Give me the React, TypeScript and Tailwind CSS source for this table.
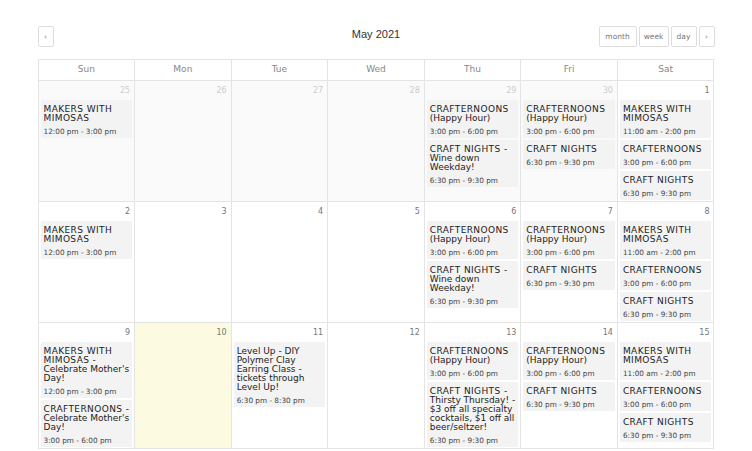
type CalEvent = { title: string[]; time: string };
type Day = { n: number; other?: boolean; today?: boolean; events: CalEvent[] };

const makers = (time: string): CalEvent => ({ title: ['MAKERS WITH', 'MIMOSAS'], time });
const happy: CalEvent = { title: ['CRAFTERNOONS', '(Happy Hour)'], time: '3:00 pm - 6:00 pm' };
const wine: CalEvent = { title: ['CRAFT NIGHTS -', 'Wine down', 'Weekday!'], time: '6:30 pm - 9:30 pm' };
const nights: CalEvent = { title: ['CRAFT NIGHTS'], time: '6:30 pm - 9:30 pm' };
const crafternoons: CalEvent = { title: ['CRAFTERNOONS'], time: '3:00 pm - 6:00 pm' };

const satEvents = [makers('11:00 am - 2:00 pm'), crafternoons, nights];

const weeks: Day[][] = [
  [
    { n: 25, other: true, events: [makers('12:00 pm - 3:00 pm')] },
    { n: 26, other: true, events: [] },
    { n: 27, other: true, events: [] },
    { n: 28, other: true, events: [] },
    { n: 29, other: true, events: [happy, wine] },
    { n: 30, other: true, events: [happy, nights] },
    { n: 1, events: satEvents },
  ],
  [
    { n: 2, events: [makers('12:00 pm - 3:00 pm')] },
    { n: 3, events: [] },
    { n: 4, events: [] },
    { n: 5, events: [] },
    { n: 6, events: [happy, wine] },
    { n: 7, events: [happy, nights] },
    { n: 8, events: satEvents },
  ],
  [
    {
      n: 9,
      events: [
        { title: ['MAKERS WITH', 'MIMOSAS -', "Celebrate Mother's", 'Day!'], time: '12:00 pm - 3:00 pm' },
        { title: ['CRAFTERNOONS -', "Celebrate Mother's", 'Day!'], time: '3:00 pm - 6:00 pm' },
      ],
    },
    { n: 10, today: true, events: [] },
    {
      n: 11,
      events: [
        {
          title: ['Level Up - DIY', 'Polymer Clay', 'Earring Class -', 'tickets through', 'Level Up!'],
          time: '6:30 pm - 8:30 pm',
        },
      ],
    },
    { n: 12, events: [] },
    {
      n: 13,
      events: [
        happy,
        {
          title: ['CRAFT NIGHTS -', 'Thirsty Thursday! -', '$3 off all specialty', 'cocktails, $1 off all', 'beer/seltzer!'],
          time: '6:30 pm - 9:30 pm',
        },
      ],
    },
    { n: 14, events: [happy, nights] },
    { n: 15, events: satEvents },
  ],
];

const dayNames = ['Sun', 'Mon', 'Tue', 'Wed', 'Thu', 'Fri', 'Sat'];

function Button({ label, w }: { label: string; w: string }) {
  return (
    <div
      className={`${w} h-[21px] flex items-center justify-center border border-[#dddddd] rounded-[2px] bg-white text-[7.5px] text-[#777]`}
    >
      {label}
    </div>
  );
}

export default function App() {
  return (
    <div className="min-h-screen bg-white font-['DejaVu_Sans',sans-serif]">
      <div className="w-[677px] mx-auto pt-[26px]">
        {/* Toolbar */}
        <div className="grid grid-cols-[1fr_auto_1fr] items-start">
          <div className="flex">
            <Button label="‹" w="w-[16px]" />
          </div>
          <h2 className="mt-[1px] text-[11px] leading-[14px] text-[#333] font-['Liberation_Sans',Arial,sans-serif]">
            May 2021
          </h2>
          <div className="flex justify-end gap-[2px]">
            <Button label="month" w="w-[38px]" />
            <Button label="week" w="w-[30px]" />
            <Button label="day" w="w-[26px]" />
            <Button label="›" w="w-[16px]" />
          </div>
        </div>

        {/* Calendar */}
        <div className="mt-[12px] border-l border-t border-[#e4e4e4]">
          <div className="grid grid-cols-7">
            {dayNames.map((d) => (
              <div
                key={d}
                className="h-[21px] flex items-center justify-center border-r border-b border-[#e4e4e4] text-[9px] text-[#888]"
              >
                {d}
              </div>
            ))}
          </div>

          {weeks.map((week, wi) => (
            <div key={wi} className="grid grid-cols-7">
              {week.map((day) => (
                <div
                  key={day.n}
                  className={`min-h-[120px] border-r border-b border-[#e4e4e4] px-[2px] pb-[1px] ${
                    day.today ? 'bg-[#fcfbe2]' : day.other ? 'bg-[#fafafa]' : 'bg-white'
                  }`}
                >
                  <div
                    className={`pt-[3px] pr-[2px] text-right text-[8px] leading-[13px] ${
                      day.other ? 'text-[#cccccc]' : 'text-[#777]'
                    }`}
                  >
                    {day.n}
                  </div>
                  <div className="mt-[3px] flex flex-col gap-[2px]">
                    {day.events.map((ev, i) => (
                      <div key={i} className="bg-[#f3f3f3] px-[3px] pt-[5px] pb-[1px] overflow-hidden">
                        <div className="text-[9px] leading-[9px] text-[#222]">
                          {ev.title.map((line) => (
                            <div
                              key={line}
                              className={`whitespace-nowrap ${
                                line === line.toUpperCase() ? 'tracking-[0.4px]' : 'tracking-normal'
                              }`}
                            >
                              {line}
                            </div>
                          ))}
                        </div>
                        <div className="mt-[4px] text-[7.3px] leading-[10px] text-[#444] whitespace-nowrap">
                          {ev.time}
                        </div>
                      </div>
                    ))}
                  </div>
                </div>
              ))}
            </div>
          ))}
        </div>
      </div>
    </div>
  );
}
